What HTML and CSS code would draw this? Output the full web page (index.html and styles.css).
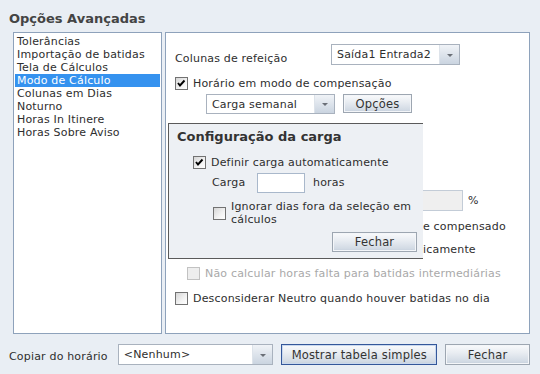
FILE: index.html
```html
<!DOCTYPE html>
<html lang="pt">
<head>
    <meta charset="UTF-8">
    <title>Opções Avançadas</title>
    <link rel="stylesheet" href="styles.css">
</head>
<body>
    <div class="dialog">
        <h1 class="title">Opções Avançadas</h1>

        <div class="main">
            <!-- Lista de seções -->
            <ul class="nav-list">
                <li>Tolerâncias</li>
                <li>Importação de batidas</li>
                <li>Tela de Cálculos</li>
                <li class="selected">Modo de Cálculo</li>
                <li>Colunas em Dias</li>
                <li>Noturno</li>
                <li>Horas In Itinere</li>
                <li>Horas Sobre Aviso</li>
            </ul>

            <!-- Painel Modo de Cálculo -->
            <div class="panel">
                <div class="row row-meal">
                    <span class="meal-label">Colunas de refeição</span>
                    <div class="select select-meal"><span class="select-text">Saída1 Entrada2</span><span class="arrow"></span></div>
                </div>

                <div class="row row-comp">
                    <span class="cb checked"><svg viewBox="0 0 11 11"><polyline points="2,5 4,7.5 8.5,2.5" /></svg></span>
                    <span>Horário em modo de compensação</span>
                </div>

                <div class="row row-carga">
                    <div class="select select-carga"><span class="select-text">Carga semanal</span><span class="arrow"></span></div>
                    <button class="btn btn-opcoes">Opções</button>
                </div>

                <!-- linhas parcialmente cobertas pela janela flutuante -->
                <div class="row row-pct">
                    <span class="cut cut-pct"></span>
                    <span class="input input-pct"></span>
                    <span class="pct-sign">%</span>
                </div>

                <div class="row row-under">
                    <span class="cut"></span><span>e compensado</span>
                </div>

                <div class="row row-under row-auto">
                    <span class="cut"></span><span>icamente</span>
                </div>

                <div class="row row-nao disabled">
                    <span class="cb"></span>
                    <span>Não calcular horas falta para batidas intermediárias</span>
                </div>

                <div class="row row-neutro">
                    <span class="cb"></span>
                    <span>Desconsiderar Neutro quando houver batidas no dia</span>
                </div>

                <!-- Janela flutuante -->
                <div class="popup">
                    <div class="popup-title">Configuração da carga</div>
                    <div class="row popup-auto">
                        <span class="cb checked"><svg viewBox="0 0 11 11"><polyline points="2,5 4,7.5 8.5,2.5" /></svg></span>
                        <span>Definir carga automaticamente</span>
                    </div>
                    <div class="row popup-carga">
                        <span class="carga-label">Carga</span>
                        <span class="input input-carga"></span>
                        <span class="horas">horas</span>
                    </div>
                    <div class="row popup-ignorar">
                        <span class="cb"></span>
                        <span class="ignorar-label">Ignorar dias fora da seleção em cálculos</span>
                    </div>
                    <div class="row popup-actions">
                        <button class="btn btn-popup-close">Fechar</button>
                    </div>
                </div>
            </div>
        </div>

        <div class="footer">
            <span class="copy-label">Copiar do horário</span>
            <div class="select select-copy"><span class="select-text">&lt;Nenhum&gt;</span><span class="arrow"></span></div>
            <button class="btn btn-focus btn-table">Mostrar tabela simples</button>
            <button class="btn btn-close">Fechar</button>
        </div>
    </div>
</body>
</html>
```

FILE: styles.css
```css
body {
    margin: 0;
    background-color: #e9eef4;
    font-family: "DejaVu Sans", Tahoma, sans-serif;
    font-size: 11px;
    letter-spacing: 0.18px;
    color: #2e2e2e;
}

.dialog {
    width: 540px;
    height: 374px;
    box-sizing: border-box;
    padding: 10px 10px 0 9px;
}

.title {
    margin: 0 0 4px 0;
    font-size: 13px;
    line-height: 18px;
    font-weight: bold;
    letter-spacing: 0;
    color: #444444;
}

.main {
    display: flex;
    gap: 3px;
    height: 302px;
    padding-left: 4px;
}

/* lista da esquerda */
.nav-list {
    width: 149px;
    box-sizing: border-box;
    margin: 0;
    padding: 2px 1px;
    list-style: none;
    background-color: #ffffff;
    border: 1px solid #8ea2bb;
}

.nav-list li {
    line-height: 13px;
    padding-left: 2px;
    white-space: nowrap;
}

.nav-list li.selected {
    background-color: #3592ef;
    color: #ffffff;
}

/* painel da direita */
.panel {
    position: relative;
    width: 365px;
    box-sizing: border-box;
    padding: 11px 9px 0 9px;
    background-color: #ffffff;
    border: 1px solid #8ea2bb;
}

.row {
    display: flex;
    align-items: center;
    white-space: nowrap;
}

.row-meal {
    height: 21px;
    align-items: flex-end;
}

.meal-label {
    width: 156px;
    line-height: 13px;
}

.row-comp {
    margin-top: 12px;
    height: 13px;
}

.row-carga {
    margin-top: 4px;
    padding-left: 31px;
    align-items: flex-start;
}

.row-pct {
    margin-top: 76px;
    height: 20px;
}

.row-under {
    margin-top: 9px;
    height: 14px;
}

.row-auto {
    margin-top: 9px;
}

.row-nao {
    margin-top: 10px;
    height: 14px;
    padding-left: 12px;
}

.row-neutro {
    margin-top: 11px;
    height: 14px;
}

.disabled {
    color: #a9a9a9;
}

.cut {
    flex: none;
    width: 248px;
}

.cut-pct {
    width: 228px;
}

.pct-sign {
    margin-left: 5px;
}

/* checkbox */
.cb {
    flex: none;
    width: 13px;
    height: 13px;
    box-sizing: border-box;
    margin-right: 5px;
    border: 1px solid #727272;
    background: linear-gradient(135deg, #d6d6d6 0%, #f3f3f3 60%, #ffffff 100%);
}

.cb svg {
    display: block;
    width: 11px;
    height: 11px;
}

.cb polyline {
    fill: none;
    stroke: #000000;
    stroke-width: 1.9;
}

.disabled .cb {
    border-color: #c2c2c2;
    background: #eeeeee;
}

/* select */
.select {
    display: flex;
    box-sizing: border-box;
    background-color: #ffffff;
    border: 1px solid #a9b2be;
}

.select-text {
    padding-left: 5px;
    align-self: center;
}

.arrow {
    position: relative;
    width: 19px;
    margin-left: auto;
    border-left: 1px solid #dde3ea;
    background: linear-gradient(#f0f3f7, #cad4e0);
}

.arrow::after {
    content: "";
    position: absolute;
    left: 7px;
    top: 50%;
    margin-top: -1px;
    border-left: 3px solid transparent;
    border-right: 3px solid transparent;
    border-top: 3px solid #6a6f77;
}

.select-meal {
    width: 129px;
    height: 21px;
}

.select-carga {
    width: 129px;
    height: 20px;
}

.select-copy {
    width: 156px;
    height: 21px;
}

/* botões */
.btn {
    box-sizing: border-box;
    padding: 0;
    font-family: inherit;
    font-size: 11.5px;
    letter-spacing: 0.18px;
    color: #333333;
    border: 1px solid #9da6b1;
    background: linear-gradient(#f9fafc 0%, #e9edf2 40%, #d3dbe5 85%, #c6d0dc 100%);
    box-shadow: inset 0 0 0 1px #f4f6f9;
}

.btn-focus {
    border-color: #34579a;
    box-shadow: inset 0 0 0 1px #c9d8ee;
}

.btn-opcoes {
    width: 69px;
    height: 19px;
    margin-left: 8px;
}

/* campos */
.input {
    display: inline-block;
    box-sizing: border-box;
    background-color: #ffffff;
    border: 1px solid #a9b8cb;
}

.input-pct {
    width: 60px;
    height: 21px;
    background-color: #efefef;
    border-color: #c3ccd7;
}

/* janela flutuante */
.popup {
    position: absolute;
    left: 2px;
    top: 90px;
    width: 255px;
    height: 136px;
    box-sizing: border-box;
    padding: 5px 0 0 8px;
    background-color: #edf0f4;
    border: 1px solid #5a5a5a;
    border-right: none;
}

.popup-title {
    font-size: 13px;
    line-height: 16px;
    font-weight: bold;
    letter-spacing: 0;
    color: #333333;
}

.popup-auto {
    margin-top: 10px;
    height: 14px;
    padding-left: 16px;
}

.popup-carga {
    margin-top: 4px;
    height: 19px;
    padding-left: 35px;
}

.carga-label {
    width: 45px;
}

.input-carga {
    width: 48px;
    height: 20px;
}

.horas {
    margin-left: 8px;
}

.popup-ignorar {
    margin-top: 8px;
    padding-left: 36px;
    align-items: flex-start;
}

.popup-ignorar .cb {
    margin-top: 7px;
}

.ignorar-label {
    width: 188px;
    white-space: normal;
    line-height: 13px;
}

.popup-actions {
    margin-top: 6px;
    margin-right: 6px;
    justify-content: flex-end;
}

.btn-popup-close {
    width: 85px;
    height: 20px;
}

/* rodapé */
.footer {
    display: flex;
    align-items: center;
    margin-top: 10px;
    height: 21px;
}

.copy-label {
    width: 109px;
    padding-top: 4px;
}

.btn-table {
    width: 156px;
    height: 21px;
    margin-left: 8px;
}

.btn-close {
    width: 85px;
    height: 21px;
    margin-left: 8px;
}
```
